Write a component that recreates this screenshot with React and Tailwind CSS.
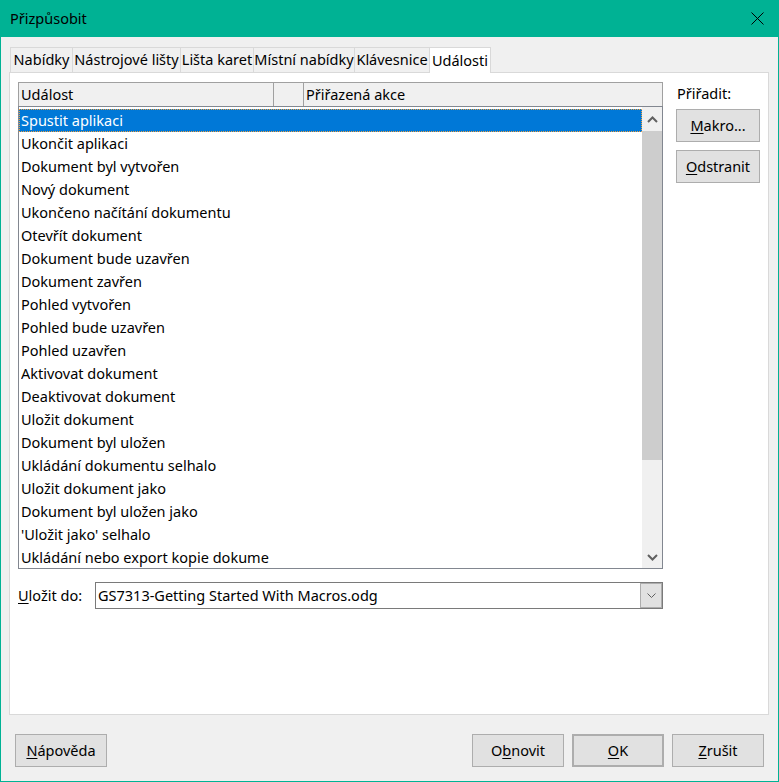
import React from "react";

const events = [
  "Spustit aplikaci",
  "Ukončit aplikaci",
  "Dokument byl vytvořen",
  "Nový dokument",
  "Ukončeno načítání dokumentu",
  "Otevřít dokument",
  "Dokument bude uzavřen",
  "Dokument zavřen",
  "Pohled vytvořen",
  "Pohled bude uzavřen",
  "Pohled uzavřen",
  "Aktivovat dokument",
  "Deaktivovat dokument",
  "Uložit dokument",
  "Dokument byl uložen",
  "Ukládání dokumentu selhalo",
  "Uložit dokument jako",
  "Dokument byl uložen jako",
  "'Uložit jako' selhalo",
  "Ukládání nebo export kopie dokumentu",
];

const tabs = [
  { label: "Nabídky", w: "w-[62px]" },
  { label: "Nástrojové lišty", w: "w-[108px]" },
  { label: "Lišta karet", w: "w-[73px]" },
  { label: "Místní nabídky", w: "w-[101px]" },
  { label: "Klávesnice", w: "w-[75px]" },
];

const Btn = ({ children, className = "" }) => (
  <button
    className={`h-[33px] bg-[#e1e1e1] border border-[#adadad] text-[14.5px] text-black flex items-center justify-center ${className}`}
  >
    {children}
  </button>
);

const Chevron = ({ up }) => (
  <svg width="11" height="7" viewBox="0 0 11 7" className="text-[#606060]">
    <path
      d={up ? "M1 6 L5.5 1.5 L10 6" : "M1 1 L5.5 5.5 L10 1"}
      fill="none"
      stroke="currentColor"
      strokeWidth="2"
    />
  </svg>
);

export default function App() {
  return (
    <div
      className="w-[779px] h-[782px] flex flex-col border-x border-b border-[#00b294] bg-[#f0f0f0] text-black text-[14.5px]"
      style={{ fontFamily: '"Noto Sans", sans-serif' }}
    >
      {/* title bar */}
      <div className="h-[37px] bg-[#00b294] flex items-center justify-between pl-[9px] pr-[14px] shrink-0">
        <span>Přizpůsobit</span>
        <svg width="13" height="13" viewBox="0 0 13 13">
          <path d="M0.5 0.5 L12.5 12.5 M12.5 0.5 L0.5 12.5" stroke="#000" strokeWidth="1" />
        </svg>
      </div>

      <div className="flex-1 flex flex-col pt-[9px] pl-[8px] pr-[9px]">
        {/* tabs */}
        <div className="flex items-end h-[26px] pl-[1px]">
          {tabs.map((t) => (
            <div
              key={t.label}
              className={`${t.w} h-[25px] border border-r-0 border-b-0 border-[#d9d9d9] bg-[#f0f0f0] flex items-center justify-center whitespace-nowrap`}
            >
              {t.label}
            </div>
          ))}
          <div className="w-[62px] h-[26px] border border-b-0 border-[#d9d9d9] bg-white flex items-center justify-center relative top-[1px]">
            Události
          </div>
        </div>

        {/* panel */}
        <div className="h-[643px] bg-white border border-[#d9d9d9] flex flex-col pt-[9px] pl-[8px]">
          <div className="flex">
            {/* list */}
            <div className="w-[645px] h-[487px] flex flex-col">
              <div className="h-[24px] flex border border-b-0 border-[#a0a0a0] bg-[#f0f0f0]">
                <div className="w-[255px] border-r border-[#a0a0a0] pl-[2px] pt-[1px] flex items-center">Událost</div>
                <div className="w-[30px] border-r border-[#a0a0a0]" />
                <div className="flex-1 pl-[2px] pt-[1px] flex items-center">Přiřazená akce</div>
              </div>
              <div className="flex-1 border border-[#828790] flex overflow-hidden">
                <div className="flex-1 flex flex-col pt-[2px]">
                  {events.map((e, i) => (
                    <div
                      key={e}
                      className={`h-[23px] shrink-0 flex items-center pl-[2px] ${
                        i === 0
                          ? "bg-[#0078d7] text-white outline-1 outline-dotted outline-[#f0a040] -outline-offset-1"
                          : ""
                      }`}
                    >
                      <span className="w-[248px] overflow-hidden whitespace-nowrap">{e}</span>
                    </div>
                  ))}
                </div>
                {/* scrollbar */}
                <div className="w-[20px] bg-[#f0f0f0] flex flex-col">
                  <div className="h-[24px] flex items-center justify-center">
                    <Chevron up />
                  </div>
                  <div className="h-[329px] bg-[#cdcdcd]" />
                  <div className="flex-1" />
                  <div className="h-[22px] flex items-center justify-center">
                    <Chevron />
                  </div>
                </div>
              </div>
            </div>

            {/* right column */}
            <div className="ml-[13px] w-[84px] flex flex-col">
              <div className="h-[23px] flex items-center pl-[1px]">Přiřadit:</div>
              <Btn className="mt-[4px] w-[84px]">
                <span><span className="underline underline-offset-2">M</span>akro...</span>
              </Btn>
              <Btn className="mt-[8px] w-[84px]">
                <span><span className="underline underline-offset-2">O</span>dstranit</span>
              </Btn>
            </div>
          </div>

          {/* save to */}
          <div className="flex items-center mt-[13px]">
            <span className="w-[77px]">
              <span className="underline underline-offset-2">U</span>ložit do:
            </span>
            <div className="w-[568px] h-[27px] border border-[#7a7a7a] flex">
              <div className="flex-1 pl-[2px] flex items-center">GS7313-Getting Started With Macros.odg</div>
              <div className="w-[22px] bg-[#e1e1e1] border border-[#adadad] flex items-center justify-center">
                <svg width="9" height="5" viewBox="0 0 9 5">
                  <path d="M0.5 0.5 L4.5 4.5 L8.5 0.5" fill="none" stroke="#606060" strokeWidth="1" />
                </svg>
              </div>
            </div>
          </div>
        </div>

        {/* bottom buttons */}
        <div className="flex items-center mt-[19px] pl-[6px] pr-[5px]">
          <Btn className="w-[92px]">
            <span><span className="underline underline-offset-2">N</span>ápověda</span>
          </Btn>
          <div className="flex-1" />
          <Btn className="w-[92px]">
            <span>O<span className="underline underline-offset-2">b</span>novit</span>
          </Btn>
          <Btn className="w-[92px] ml-[8px] border-2 border-[#0078d7]">
            <span><span className="underline underline-offset-2">O</span>K</span>
          </Btn>
          <Btn className="w-[92px] ml-[8px]">
            <span><span className="underline underline-offset-2">Z</span>rušit</span>
          </Btn>
        </div>
      </div>
    </div>
  );
}
